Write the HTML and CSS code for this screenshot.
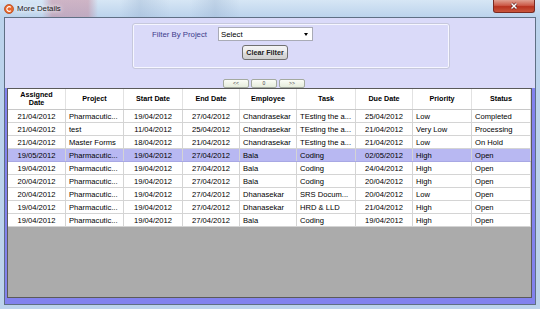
FILE: index.html
```html
<!DOCTYPE html>
<html lang="en">
<head>
    <meta charset="UTF-8">
    <title>More Details</title>
    <link rel="stylesheet" href="styles.css">
</head>
<body>
    <div class="window">
        <div class="titlebar">
            <svg class="app-icon" width="10" height="10" viewBox="0 0 10 10">
                <circle cx="5" cy="5" r="4.5" fill="#e8682c" stroke="#b84a1a" stroke-width="0.8"/>
                <path d="M6.8 3.4 A2.3 2.3 0 1 0 6.8 6.6" fill="none" stroke="#fff" stroke-width="1.2"/>
            </svg>
            <span class="title">More Details</span>
            <div class="close-btn">
                <svg width="10" height="8" viewBox="0 0 10 8">
                    <path d="M2.5 1.5 L7.5 6.5 M7.5 1.5 L2.5 6.5" stroke="#5a1010" stroke-width="2.6"/>
                    <path d="M2.5 1.5 L7.5 6.5 M7.5 1.5 L2.5 6.5" stroke="#fff" stroke-width="1.5"/>
                </svg>
            </div>
        </div>

        <div class="frame">
            <div class="client">
                <div class="top">
                    <div class="filter-box">
                        <div class="filter-row">
                            <span class="filter-label">Filter By Project</span>
                            <div class="combo">
                                <span>Select</span>
                                <span class="combo-arrow"></span>
                            </div>
                        </div>
                        <button class="clear-btn">Clear Filter</button>
                    </div>
                    <div class="pager">
                        <button class="page-btn">&lt;&lt;</button>
                        <button class="page-btn">0</button>
                        <button class="page-btn">&gt;&gt;</button>
                    </div>
                </div>

                <div class="grid-panel">
                    <div class="grid">
                        <div class="row header">
                            <div class="cell">Assigned<br>Date</div>
                            <div class="cell">Project</div>
                            <div class="cell">Start Date</div>
                            <div class="cell">End Date</div>
                            <div class="cell">Employee</div>
                            <div class="cell">Task</div>
                            <div class="cell">Due Date</div>
                            <div class="cell">Priority</div>
                            <div class="cell">Status</div>
                        </div>
                        <div class="row">
                            <div class="cell c">21/04/2012</div><div class="cell">Pharmacutic...</div><div class="cell c">19/04/2012</div><div class="cell c">27/04/2012</div><div class="cell">Chandrasekar</div><div class="cell">TEsting the a...</div><div class="cell c">25/04/2012</div><div class="cell">Low</div><div class="cell">Completed</div>
                        </div>
                        <div class="row">
                            <div class="cell c">21/04/2012</div><div class="cell">test</div><div class="cell c">11/04/2012</div><div class="cell c">25/04/2012</div><div class="cell">Chandrasekar</div><div class="cell">TEsting the a...</div><div class="cell c">21/04/2012</div><div class="cell">Very Low</div><div class="cell">Processing</div>
                        </div>
                        <div class="row">
                            <div class="cell c">21/04/2012</div><div class="cell">Master Forms</div><div class="cell c">18/04/2012</div><div class="cell c">21/04/2012</div><div class="cell">Chandrasekar</div><div class="cell">TEsting the a...</div><div class="cell c">21/04/2012</div><div class="cell">Low</div><div class="cell">On Hold</div>
                        </div>
                        <div class="row selected">
                            <div class="cell c">19/05/2012</div><div class="cell">Pharmacutic...</div><div class="cell c">19/04/2012</div><div class="cell c">27/04/2012</div><div class="cell">Bala</div><div class="cell">Coding</div><div class="cell c">02/05/2012</div><div class="cell">High</div><div class="cell">Open</div>
                        </div>
                        <div class="row">
                            <div class="cell c">19/04/2012</div><div class="cell">Pharmacutic...</div><div class="cell c">19/04/2012</div><div class="cell c">27/04/2012</div><div class="cell">Bala</div><div class="cell">Coding</div><div class="cell c">24/04/2012</div><div class="cell">High</div><div class="cell">Open</div>
                        </div>
                        <div class="row">
                            <div class="cell c">20/04/2012</div><div class="cell">Pharmacutic...</div><div class="cell c">19/04/2012</div><div class="cell c">27/04/2012</div><div class="cell">Bala</div><div class="cell">Coding</div><div class="cell c">20/04/2012</div><div class="cell">High</div><div class="cell">Open</div>
                        </div>
                        <div class="row">
                            <div class="cell c">20/04/2012</div><div class="cell">Pharmacutic...</div><div class="cell c">19/04/2012</div><div class="cell c">27/04/2012</div><div class="cell">Dhanasekar</div><div class="cell">SRS Docum...</div><div class="cell c">20/04/2012</div><div class="cell">Low</div><div class="cell">Open</div>
                        </div>
                        <div class="row">
                            <div class="cell c">19/04/2012</div><div class="cell">Pharmacutic...</div><div class="cell c">19/04/2012</div><div class="cell c">27/04/2012</div><div class="cell">Dhanasekar</div><div class="cell">HRD &amp; LLD</div><div class="cell c">21/04/2012</div><div class="cell">High</div><div class="cell">Open</div>
                        </div>
                        <div class="row">
                            <div class="cell c">19/04/2012</div><div class="cell">Pharmacutic...</div><div class="cell c">19/04/2012</div><div class="cell c">27/04/2012</div><div class="cell">Bala</div><div class="cell">Coding</div><div class="cell c">19/04/2012</div><div class="cell">High</div><div class="cell">Open</div>
                        </div>
                    </div>
                </div>
            </div>
        </div>
    </div>
</body>
</html>
```

FILE: styles.css
```css
body {
    margin: 0;
    font-family: 'Liberation Sans', Arial, sans-serif;
    color: #000;
}
.window {
    width: 540px;
    height: 309px;
    display: flex;
    flex-direction: column;
    background: #bcd3ec;
}
.titlebar {
    height: 17px;
    display: flex;
    align-items: center;
    background:
        linear-gradient(90deg, transparent 42px, rgba(196, 120, 140, 0.45) 52px, rgba(196, 120, 140, 0.45) 88px, transparent 98px),
        linear-gradient(90deg, transparent 120px, rgba(150, 175, 205, 0.35) 140px, transparent 170px, transparent 190px, rgba(150, 175, 205, 0.35) 215px, transparent 240px),
        linear-gradient(#d6e6f5, #bcd3ec);
}
.app-icon {
    margin-left: 4px;
    flex-shrink: 0;
}
.title {
    margin-left: 3px;
    font-size: 7.8px;
    color: #1a1a1a;
    text-shadow: 0 0 4px #fff, 0 0 6px #fff;
}
.close-btn {
    margin-left: auto;
    margin-right: 5px;
    align-self: flex-start;
    width: 42px;
    height: 13px;
    box-sizing: border-box;
    border: 1px solid #7a2a22;
    border-top: none;
    border-radius: 0 0 3px 3px;
    background: linear-gradient(#e0a092, #cc5a48 45%, #b8321f 55%, #c9553c);
    display: flex;
    align-items: center;
    justify-content: center;
}
.frame {
    flex: 1;
    display: flex;
    padding: 0 4px 4px;
}
.client {
    flex: 1;
    display: flex;
    flex-direction: column;
    border: 1px solid #5f6f84;
    background: #dadaf9;
}
.top {
    height: 70px;
    flex-shrink: 0;
}
.filter-box {
    margin: 5px 0 0 127px;
    width: 318px;
    height: 46px;
    box-sizing: border-box;
    border: 1px solid #c6c8dc;
    border-radius: 3px;
    box-shadow: inset 0 0 0 1px #f6f6ff;
}
.filter-row {
    display: flex;
    align-items: center;
    margin-top: 3px;
    padding-left: 19px;
    height: 14px;
}
.filter-label {
    width: 66px;
    font-size: 7.8px;
    color: #3c3a8a;
}
.combo {
    width: 95px;
    height: 14px;
    box-sizing: border-box;
    border: 1px solid #a9abb6;
    background: #fff;
    display: flex;
    align-items: center;
    justify-content: space-between;
    padding: 0 4px 0 2px;
    font-size: 7.8px;
}
.combo-arrow {
    width: 0;
    height: 0;
    border-left: 2.5px solid transparent;
    border-right: 2.5px solid transparent;
    border-top: 3px solid #000;
}
.clear-btn {
    display: block;
    margin: 4px 0 0 109px;
    width: 46px;
    height: 15px;
    padding: 0;
    box-sizing: border-box;
    border: 1px solid #707070;
    border-radius: 3px;
    background: linear-gradient(#f4f4f4, #ebebeb 48%, #dddddd 52%, #cfcfcf);
    font-family: 'Liberation Sans', Arial, sans-serif;
    font-size: 7.2px;
    font-weight: bold;
    color: #222;
}
.pager {
    display: flex;
    gap: 2px;
    margin: 10px 0 0 218px;
}
.page-btn {
    width: 26px;
    height: 9px;
    padding: 0;
    box-sizing: border-box;
    border: 1px solid #a4aaa0;
    border-radius: 2px;
    background: linear-gradient(#fbfdf6, #e6ecdc);
    font-family: 'Liberation Sans', Arial, sans-serif;
    font-size: 5px;
    line-height: 7px;
    color: #444;
}
.grid-panel {
    flex: 1;
    display: flex;
    padding: 0 3px 6px 2px;
    background: #8282ee;
}
.grid {
    flex: 1;
    border: 1px solid #5a5a5a;
    background: #ababab;
}
.row {
    display: grid;
    grid-template-columns: 58px 58px 59px 57px 57px 59px 57px 59px 59px;
    height: 13px;
    box-sizing: border-box;
    border-bottom: 1px solid #d4d4d4;
    background: #fff;
    font-size: 7.6px;
}
.row.header {
    height: 21px;
    border-bottom-color: #c8c8c8;
    font-weight: bold;
    font-size: 7.2px;
    line-height: 8px;
}
.row.selected {
    background: #b8b8f2;
    border-bottom-color: #a8a8e4;
}
.cell {
    display: flex;
    align-items: center;
    padding: 0 3px;
    border-right: 1px solid #d4d4d4;
    white-space: nowrap;
    overflow: hidden;
}
.header .cell {
    justify-content: center;
    text-align: center;
    border-right-color: #e2e2e2;
}
.cell.c {
    justify-content: center;
}
```
